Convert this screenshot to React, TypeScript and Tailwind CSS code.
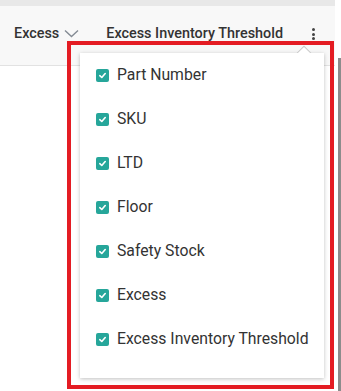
import React from "react";

const items = [
  "Part Number",
  "SKU",
  "LTD",
  "Floor",
  "Safety Stock",
  "Excess",
  "Excess Inventory Threshold",
];

function Check() {
  return (
    <span className="flex h-[13px] w-[13px] shrink-0 items-center justify-center rounded-[2px] bg-[#26a69a]">
      <svg width="9" height="9" viewBox="0 0 10 10" fill="none">
        <path d="M2 5.2 L4.2 7.2 L8 2.8" stroke="white" strokeWidth="1.8" strokeLinecap="round" strokeLinejoin="round" />
      </svg>
    </span>
  );
}

export default function App() {
  return (
    <div
      className="relative h-[391px] w-[341px] overflow-hidden bg-white"
      style={{ fontFamily: "Roboto, 'Liberation Sans', sans-serif" }}
    >
      <div className="flex h-full">
        <div className="flex w-[335px] flex-col">
          <div className="h-[6px] bg-[#e8e8e8]" />
          <div className="flex h-[60px] items-center border-b border-[#e2e2e2] bg-[#f8f8f8] pb-[3px] text-[14.4px] font-medium text-[#333]">
            <span className="ml-[14px]">Excess</span>
            <svg className="mb-[2px] ml-[5px]" width="15" height="9" viewBox="0 0 15 9" fill="none">
              <path d="M1 1.5 L7.5 7.5 L14 1.5" stroke="#848b94" strokeWidth="1.4" />
            </svg>
            <span className="ml-[27px]">Excess Inventory Threshold</span>
            <span className="ml-[29px] flex flex-col gap-[1.5px]">
              <span className="h-[3px] w-[3px] rounded-full bg-[#444]" />
              <span className="h-[3px] w-[3px] rounded-full bg-[#444]" />
              <span className="h-[3px] w-[3px] rounded-full bg-[#444]" />
            </span>
          </div>
        </div>
        <div className="relative w-[6px]">
          <div className="absolute bottom-0 left-[3px] top-[58px] w-[3px] bg-[#8c8c8c]" />
        </div>
      </div>

      <div className="absolute left-[67px] top-[41px] flex h-[348px] w-[267px] border-4 border-[#e41c23] pb-[7px] pl-[9px] pr-[6px] pt-[8px]">
        <div className="relative flex flex-1 flex-col bg-white shadow-[0_1px_4px_rgba(0,0,0,0.25)]">
          <div className="absolute left-[215px] top-[-8px] h-[8px] w-[18px] overflow-hidden">
            <div className="absolute left-[3px] top-[2.5px] h-[12px] w-[12px] rotate-45 border border-[#c8c8c8] bg-white" />
          </div>
          <div className="relative flex flex-col">
            {items.map((it) => (
              <div key={it} className="flex h-[44px] items-center pl-[16px]">
                <Check />
                <span className="ml-[8px] text-[15.75px] text-[#333]">{it}</span>
              </div>
            ))}
          </div>
        </div>
      </div>
    </div>
  );
}
